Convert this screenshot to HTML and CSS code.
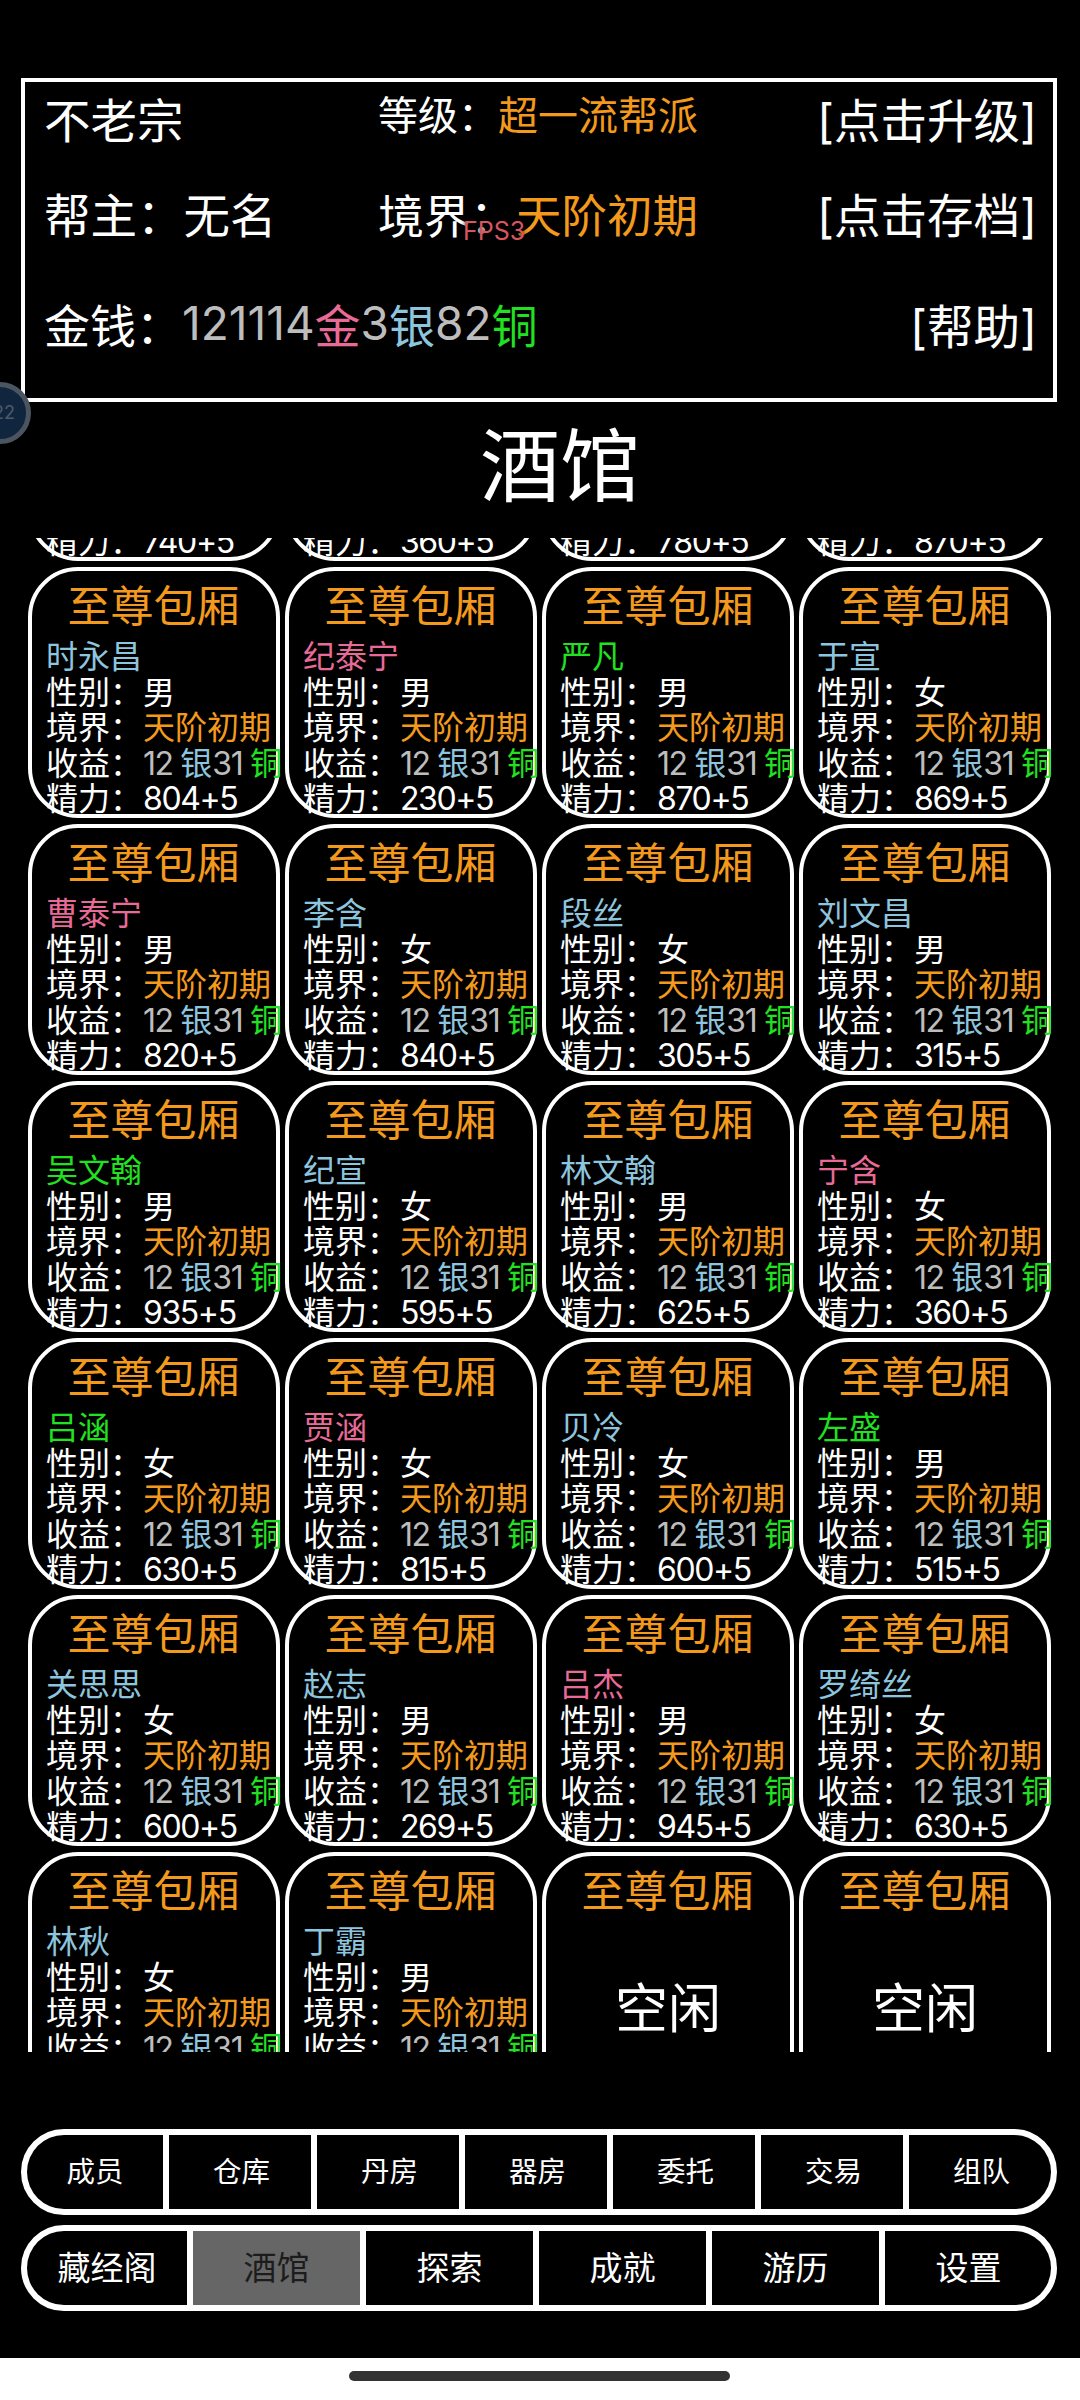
FILE: index.html
```html
<!DOCTYPE html>
<html lang="zh-CN">
<head>
  <meta charset="UTF-8" />
  <meta name="viewport" content="width=device-width, initial-scale=1.0"/>
  <title>酒馆</title>
  <link rel="stylesheet" href="styles.css">
</head>
<body>
  <div class="app">
    <!-- Sect info -->
    <div class="panel">
      <div class="cell large">不老宗</div>
      <div class="cell raised">等级：<span class="orange">超一流帮派</span></div>
      <div class="cell action">[点击升级]</div>

      <div class="cell large">帮主：无名</div>
      <div class="cell realm">境界：<span class="orange">天阶初期</span></div>
      <div class="cell action">[点击存档]</div>

      <div class="cell money">金钱：<span class="num">121114</span><span class="pink">金</span><span class="num">3</span><span class="blue">银</span><span class="num">82</span><span class="green">铜</span></div>
      <div class="cell action">[帮助]</div>
    </div>

    <h1 class="page-title">酒馆</h1>

    <!-- Rooms, scrolled part way down -->
    <div class="room-scroll">
      <div class="room-grid" id="roomGrid"></div>
    </div>

    <!-- Menus -->
    <div class="menu menu-small">
      <div>成员</div><div>仓库</div><div>丹房</div><div>器房</div><div>委托</div><div>交易</div><div>组队</div>
    </div>
    <div class="menu menu-large">
      <div>藏经阁</div><div class="active">酒馆</div><div>探索</div><div>成就</div><div>游历</div><div>设置</div>
    </div>

    <div class="home-bar"><span></span></div>

    <div class="fps">FPS3</div>
    <div class="float-ball">22</div>
  </div>

  <script>
    const rooms = [
      { energy: "740" }, { energy: "360" }, { energy: "780" }, { energy: "870" },
      { name: "时永昌", color: "blue", gender: "男", energy: "804" },
      { name: "纪泰宁", color: "pink", gender: "男", energy: "230" },
      { name: "严凡", color: "green", gender: "男", energy: "870" },
      { name: "于宣", color: "blue", gender: "女", energy: "869" },
      { name: "曹泰宁", color: "pink", gender: "男", energy: "820" },
      { name: "李含", color: "blue", gender: "女", energy: "840" },
      { name: "段丝", color: "blue", gender: "女", energy: "305" },
      { name: "刘文昌", color: "blue", gender: "男", energy: "315" },
      { name: "吴文翰", color: "green", gender: "男", energy: "935" },
      { name: "纪宣", color: "blue", gender: "女", energy: "595" },
      { name: "林文翰", color: "blue", gender: "男", energy: "625" },
      { name: "宁含", color: "pink", gender: "女", energy: "360" },
      { name: "吕涵", color: "green", gender: "女", energy: "630" },
      { name: "贾涵", color: "pink", gender: "女", energy: "815" },
      { name: "贝冷", color: "blue", gender: "女", energy: "600" },
      { name: "左盛", color: "green", gender: "男", energy: "515" },
      { name: "关思思", color: "blue", gender: "女", energy: "600" },
      { name: "赵志", color: "blue", gender: "男", energy: "269" },
      { name: "吕杰", color: "pink", gender: "男", energy: "945" },
      { name: "罗绮丝", color: "blue", gender: "女", energy: "630" },
      { name: "林秋", color: "blue", gender: "女" },
      { name: "丁霸", color: "blue", gender: "男" },
      {}, {}
    ];

    const grid = document.getElementById("roomGrid");

    rooms.forEach((room, i) => {
      const card = document.createElement("div");
      card.className = "room-card";
      const idle = i >= 4 && !room.name;
      card.innerHTML = `<div class="room-title">至尊包厢</div>` + (idle
        ? `<div class="room-idle">空闲</div>`
        : `
        <div class="room-line ${room.color || ""}">${room.name || ""}</div>
        <div class="room-line"><span class="label">性别：</span>${room.gender || ""}</div>
        <div class="room-line"><span class="label">境界：</span><span class="orange">天阶初期</span></div>
        <div class="room-line"><span class="label">收益：</span><span class="num">12 </span><span class="blue">银</span><span class="num">31 </span><span class="green">铜</span></div>
        ${room.energy ? `<div class="room-line"><span class="label">精力：</span><span class="energy">${room.energy}+5</span></div>` : ""}
      `);
      grid.appendChild(card);
    });
  </script>
</body>
</html>
```

FILE: styles.css
```css
* {
  margin: 0;
  padding: 0;
  box-sizing: border-box;
}

body {
  background-color: #000;
  color: #fff;
  font-family: Inter, "Noto Sans CJK SC", sans-serif;
}

.app {
  position: relative;
  width: 1080px;
  height: 2400px;
  overflow: hidden;
  padding-top: 78px;
}

.orange { color: #f39a1c; }
.pink { color: #e86a96; }
.blue { color: #8ec5de; }
.green { color: #22e022; }
.num { color: #bdbdbd; }

/* top panel */
.panel {
  display: grid;
  grid-template-columns: 334px 1fr auto;
  grid-template-rows: 71px 119px 102px;
  width: 1036px;
  height: 324px;
  margin-left: 21px;
  padding-left: 19px;
  padding-right: 16px;
  border: 4px solid #fff;
  font-size: 46px;
}

.cell {
  display: flex;
  align-items: center;
  white-space: nowrap;
}

.large {
  font-size: 46.5px;
}

.raised {
  font-size: 40px;
  padding-bottom: 10px;
}

.realm .orange {
  font-size: 45.5px;
}

.money {
  grid-column: 1 / 3;
}

.action {
  justify-content: flex-end;
  font-size: 46.5px;
}

.page-title {
  height: 136px;
  padding-top: 18px;
  padding-left: 40px;
  text-align: center;
  font-size: 80px;
  font-weight: 400;
  line-height: 92px;
}

/* room cards */
.room-scroll {
  height: 1514px;
  overflow: hidden;
}

.room-grid {
  display: grid;
  grid-template-columns: repeat(4, 252px);
  grid-auto-rows: 251px;
  gap: 6px 5px;
  margin-top: -228px;
  padding-left: 28px;
}

.room-card {
  padding: 7px 0 0 14px;
  border: 4px solid #fff;
  border-radius: 50px;
  font-size: 32px;
}

.room-title {
  margin-left: -15px;
  margin-bottom: 5px;
  text-align: center;
  font-size: 43px;
  line-height: 56px;
  color: #f39a1c;
}

.room-line {
  height: 35.5px;
  line-height: 35.5px;
  white-space: nowrap;
}

.room-line .num,
.energy {
  letter-spacing: -1.4px;
}

.label {
  display: inline-block;
  width: 97px;
}

.room-idle {
  margin-top: 60px;
  margin-left: -14px;
  text-align: center;
  font-size: 53px;
  line-height: 60px;
}

/* bottom menus */
.menu {
  display: grid;
  width: 1036px;
  height: 86px;
  margin-left: 21px;
  border: 6px solid #fff;
  border-radius: 43px;
  background: #fff;
  column-gap: 6px;
  overflow: hidden;
}

.menu div {
  display: flex;
  align-items: center;
  justify-content: center;
  padding-bottom: 5px;
  background: #000;
}

.menu-small {
  grid-template-columns: 136px repeat(6, 142px);
  margin-top: 77px;
  font-size: 28.5px;
}

.menu-small div + div {
  padding-left: 3px;
}

.menu-large {
  grid-template-columns: 160px repeat(5, 167px);
  margin-top: 10px;
  font-size: 33px;
}

.menu .active {
  background: #666;
  color: #1c1c1c;
}

.home-bar {
  position: absolute;
  left: 0;
  right: 0;
  bottom: 0;
  height: 42px;
  background: #fff;
}

.home-bar span {
  position: absolute;
  left: 349px;
  top: 13px;
  width: 381px;
  height: 10px;
  border-radius: 5px;
  background: #333;
}

/* overlays */
.fps {
  position: absolute;
  left: 463px;
  top: 215px;
  font-size: 25px;
  line-height: 32px;
  color: #d9555f;
  text-shadow: 0 0 4px #000;
}

.float-ball {
  position: absolute;
  left: -31px;
  top: 382px;
  width: 62px;
  height: 62px;
  padding-left: 19px;
  border: 5px solid #4b5560;
  border-radius: 50%;
  background: #10263f;
  color: #4c5a68;
  font-size: 18px;
  line-height: 52px;
}
```
